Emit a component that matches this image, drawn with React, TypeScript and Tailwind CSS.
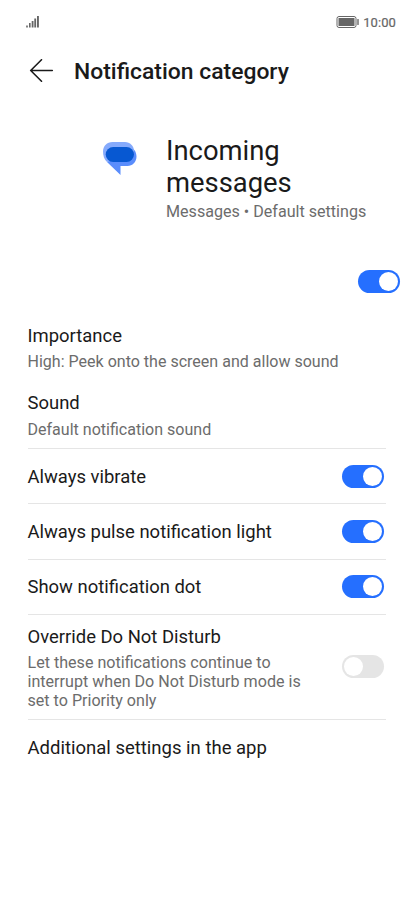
import { useState } from 'react';

interface Setting {
  title: string;
  description?: string;
  enabled: boolean;
  height: string;
}

const settings: Setting[] = [
  { title: 'Always vibrate', enabled: true, height: 'h-[55px]' },
  { title: 'Always pulse notification light', enabled: true, height: 'h-14' },
  { title: 'Show notification dot', enabled: true, height: 'h-[55px] pb-px' },
  {
    title: 'Override Do Not Disturb',
    description: 'Let these notifications continue to interrupt when Do Not Disturb mode is set to Priority only',
    enabled: false,
    height: 'h-[105px] pb-px',
  },
];

const Toggle = ({ initial }: { initial: boolean }) => {
  const [on, setOn] = useState(initial);

  return (
    <button
      role="switch"
      aria-checked={on}
      onClick={() => setOn(!on)}
      className={`flex h-[23px] w-[42px] shrink-0 items-center rounded-full p-0.5 ${
        on ? 'justify-end bg-[#256fff]' : 'justify-start bg-[#e5e5e5]'
      }`}
    >
      <span className="h-[19px] w-[19px] rounded-full bg-white" />
    </button>
  );
};

const StatusBar = () => (
  <div className="flex h-11 items-center justify-between pl-[26px] pr-[18px] text-[#666666]">
    <svg width="14" height="12" viewBox="0 0 14 12" fill="currentColor">
      <rect x="0.2" y="9.5" width="1.6" height="2" />
      <rect x="3" y="7" width="1.6" height="4.5" />
      <rect x="5.7" y="5" width="1.8" height="6.5" />
      <rect x="8.3" y="2.5" width="1.8" height="9" />
      <rect x="11" y="0" width="1.9" height="11.5" />
    </svg>
    <div className="flex items-center gap-1 pt-px">
      <svg className="mb-px" width="23" height="12" viewBox="0 0 23 12" fill="none">
        <rect x="1" y="0.5" width="19" height="11" rx="2" stroke="currentColor" />
        <rect x="2.5" y="2" width="16" height="8" rx="0.5" fill="currentColor" />
        <rect x="21.3" y="3" width="1.4" height="6" rx="0.5" fill="currentColor" />
      </svg>
      <span className="text-[13px] tracking-[0.1px] [-webkit-text-stroke:0.2px]">10:00</span>
    </div>
  </div>
);

const App = () => (
  <div className="h-[920px] w-[414px] overflow-hidden bg-white font-['Roboto',sans-serif] text-[#1a1a1a]">
    <StatusBar />

    <header className="flex h-[53px] items-center gap-5 pl-[29px]">
      <svg
        width="25"
        height="24"
        viewBox="0 0 25 24"
        fill="none"
        stroke="currentColor"
        strokeWidth="1.6"
        strokeLinecap="round"
        strokeLinejoin="round"
      >
        <path d="M23.3 11.500H1.700M12.500 0.800L1.700 11.500L12.500 22.200" />
      </svg>
      <h1 className="pt-[3px] text-[22.9px] font-medium">Notification category</h1>
    </header>

    <section className="flex h-[158px] pl-[102px] pt-[37px]">
      <svg className="mt-[7px] shrink-0" width="36" height="36" viewBox="0 0 36 36">
        <path d="M26 6C31.500 6 34.500 10.500 34.500 15.500C34.500 21 30.500 25 25.500 25H18.500V34L5 21Z" fill="#5a8dfc" />
        <path d="M10.500 1H23C28 1 32 5 32 10V13L5 21C2 18.500 1 14 1 10.500C1 5 5 1 10.500 1Z" fill="#85aafc" />
        <rect x="3.7" y="6" width="28.3" height="15" rx="7.5" fill="#0758d2" />
      </svg>
      <div className="ml-7">
        <h2 className="w-48 pt-px text-[27.4px] leading-8">Incoming messages</h2>
        <p className="mt-px text-[16.1px] leading-6 text-[#6c6c6c]">Messages • Default settings</p>
      </div>
    </section>

    <div className="flex h-[68px] justify-end pr-3.5 pt-[15px]">
      <Toggle initial />
    </div>

    <main className="pl-[27.5px] pr-7">
      <div className="h-[67px]">
        <h3 className="text-[18.45px] leading-[26px]">Importance</h3>
        <p className="text-[16.05px] leading-[25px] text-[#6c6c6c]">High: Peek onto the screen and allow sound</p>
      </div>
      <div className="h-[59px] border-b border-[#e5e5e5]">
        <h3 className="text-[18.45px] leading-[26px]">Sound</h3>
        <p className="pt-px text-[16.05px] leading-[25px] text-[#6c6c6c]">Default notification sound</p>
      </div>
      {settings.map(({ title, description, enabled, height }) => (
        <div
          key={title}
          className={`flex items-center justify-between border-b border-[#e5e5e5] pr-0.5 ${height}`}
        >
          <div>
            <h3 className={`text-[18.45px] ${description ? 'mb-[3px] leading-[26px]' : 'pt-px leading-7'}`}>{title}</h3>
            {description && (
              <p className="w-[280px] text-[16.1px] leading-[19px] text-[#6c6c6c]">{description}</p>
            )}
          </div>
          <Toggle initial={enabled} />
        </div>
      ))}
      <h3 className="flex h-[57px] items-center text-[18.5px]">Additional settings in the app</h3>
    </main>
  </div>
);

export default App;
